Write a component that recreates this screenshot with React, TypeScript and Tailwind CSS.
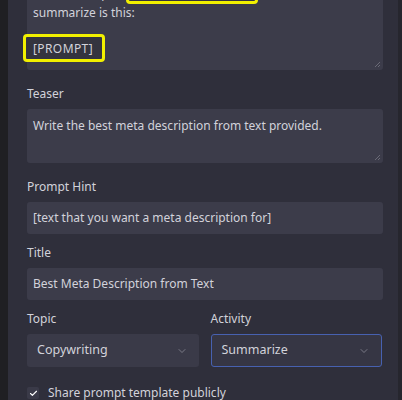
import { ChevronDown, Check } from 'lucide-react';

const font = { fontFamily: '"Noto Sans", "Open Sans", sans-serif' };

function Label({ children }: { children: React.ReactNode }) {
  return <div className="text-[12px] text-[#d2d2da] leading-[20px] mb-[5px]">{children}</div>;
}

function Grip() {
  return (
    <svg className="absolute right-[2px] bottom-[2px]" width="7" height="7" viewBox="0 0 7 7">
      <path d="M6 1L1 6M6 4L4 6" stroke="#6a6a76" strokeWidth="1" />
    </svg>
  );
}

function Select({ value, active }: { value: string; active?: boolean }) {
  return (
    <div
      className={`flex items-center justify-between h-[33px] rounded-[3px] pl-[10px] pr-[11px] text-[12.5px] text-[#d2d2da] ${
        active ? 'bg-[#363644] border border-[#4761b0]' : 'bg-[#3a3a48]'
      }`}
    >
      <span>{value}</span>
      <ChevronDown className="w-[12px] h-[12px] text-[#8e8e9a]" strokeWidth={1.5} />
    </div>
  );
}

export default function App() {
  return (
    <div className="flex w-[402px] h-[400px] overflow-hidden bg-[#1e1e22]" style={font}>
      <div className="w-[8px] shrink-0 bg-[#1f1f23]" />
      <div className="flex-1 bg-[#2f2f3b] pl-[19px] pr-[15px] overflow-hidden">
        {/* prompt template textarea, scrolled so its top is cut */}
        <div className="-mt-[39px] relative h-[109px] rounded-[3px] bg-[#3c3c4a] px-[6px] pt-[4px] text-[12px] leading-[19px] text-[#d2d2da]">
          <div className="whitespace-nowrap">Respond only in English language.</div>
          <div className="relative whitespace-nowrap">
            Write all output in{' '}
            <span className="inline-block w-[132px] h-[1px]" />
            <span className="absolute left-[93px] -top-[6px] w-[132px] h-[26px] border-[3px] border-[#f2f000] rounded-[4px] bg-[#34343f]" />{' '}
            The text to
          </div>
          <div>summarize is this:</div>
          <div className="h-[19px]" />
          <div className="-ml-[10px] -mt-[7px] w-[82px] h-[28px] flex items-center border-[3px] border-[#f2f000] rounded-[4px] bg-[#34343f] pl-[7px] tracking-[0.4px]">
            [PROMPT]
          </div>
          <Grip />
        </div>

        <div className="mt-[14px]">
          <Label>Teaser</Label>
          <div className="relative h-[54px] rounded-[3px] bg-[#3c3c4a] px-[6px] pt-[7px] text-[12px] leading-[19px] text-[#d2d2da]">
            Write the best meta description from text provided.
            <Grip />
          </div>
        </div>

        <div className="mt-[14px]">
          <Label>Prompt Hint</Label>
          <div className="flex items-center h-[32px] rounded-[3px] bg-[#3c3c4a] px-[6px] text-[12px] text-[#d2d2da]">
            [text that you want a meta description for]
          </div>
        </div>

        <div className="mt-[9px]">
          <Label>Title</Label>
          <div className="flex items-center h-[32px] rounded-[3px] bg-[#3c3c4a] px-[6px] text-[12px] text-[#d2d2da]">
            Best Meta Description from Text
          </div>
        </div>

        <div className="mt-[9px] grid grid-cols-2 gap-x-[12px] w-[355px]">
          <div>
            <Label>Topic</Label>
            <Select value="Copywriting" />
          </div>
          <div>
            <Label>Activity</Label>
            <Select value="Summarize" active />
          </div>
        </div>

        <div className="mt-[16px] flex items-center gap-[9px] text-[12px] leading-[20px] text-[#d2d2da]">
          <div className="w-[12px] h-[12px] rounded-[2px] bg-[#3a3a48] flex items-center justify-center">
            <Check className="w-[9px] h-[9px] text-white" strokeWidth={3} />
          </div>
          <span>Share prompt template publicly</span>
        </div>
      </div>
      <div className="w-[4px] shrink-0 bg-[#26262e]" />
    </div>
  );
}
